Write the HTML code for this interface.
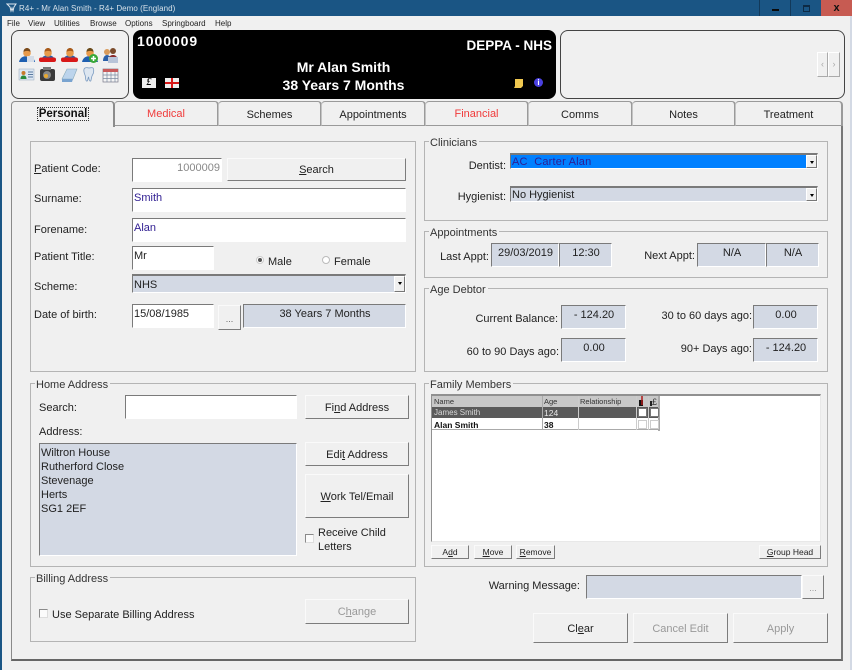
<!DOCTYPE html>
<html><head><meta charset="utf-8"><style>
html,body{margin:0;padding:0}
body{width:852px;height:670px;position:relative;overflow:hidden;background:#f0f0f0;font:11px/14px "Liberation Sans",sans-serif;color:#222;filter:blur(.3px)}
div,span,svg{position:absolute;box-sizing:border-box}
.t{white-space:nowrap;margin-top:1px}
.r{text-align:right}
.c{text-align:center}
u{text-decoration:underline}
.g{border:1px solid #b4b4b4}
.l{position:absolute;background:#f0f0f0;padding:0 2px 0 1px;white-space:nowrap;color:#333;margin-top:1px;height:13px}
.b{background:#f0f0f0;border:1px solid;border-color:#fafafa #7c7c7c #7c7c7c #fafafa;text-align:center;white-space:nowrap;color:#222}
.d{color:#999}
.i{background:#fff;border:1px solid;border-color:#7a7a7a #fff #fff #7a7a7a;white-space:nowrap;padding:2px 0 0 1px;line-height:14px}
.s{background:#d3d9e4}
.n{color:#2f1d91}
.tab{top:101px;height:25px;border:1px solid #9a9a9a;border-left-color:#c4c4c4;border-radius:4px 4px 0 0;background:#f0f0f0;text-align:center;line-height:25px;border-right-width:2px;padding-top:1px}
.red{color:#f03a3a}
.ar{right:0;top:0;width:11px;background:#f0f0f0;border:1px solid;border-color:#fff #777 #777 #fff}
.ar:after{content:"";position:absolute;left:3px;top:5px;border:2px solid transparent;border-top:3px solid #000;border-bottom:0}
.cb{background:#fbfbfb;border:1px solid;border-color:#8a8a8a #ddd #ddd #8a8a8a;width:9px;height:9px}
</style></head><body>
<!-- title bar -->
<div style="left:0;top:0;width:852px;height:16px;background:#1a5584"></div>
<div style="left:0;top:16px;width:2px;height:654px;background:#1a5584"></div>
<div style="left:850px;top:16px;width:2px;height:654px;background:#d3d9e4"></div>
<svg style="left:6px;top:2px" width="12" height="13" viewBox="0 0 12 13"><path d="M1 2h9l-2 3-1 4-1-3-1 3-1-4z" fill="none" stroke="#dfe8ef" stroke-width="1"/></svg>
<div class="t" style="left:19px;top:1px;color:#d6e0e8;font-size:8px;letter-spacing:.05px">R4+ - Mr Alan Smith - R4+ Demo (England)</div>
<div style="left:759px;top:0;width:31px;height:16px;border-left:1px solid #12395a;background:#1a5584"></div>
<div style="left:772px;top:9px;width:7px;height:2px;background:#0a0a0a"></div>
<div style="left:790px;top:0;width:31px;height:16px;border-left:1px solid #12395a"></div>
<div style="left:803px;top:5px;width:7px;height:7px;border:1px solid #0d2a44;border-top-width:2px"></div>
<div style="left:821px;top:0;width:31px;height:16px;background:#c75b52;color:#111;text-align:center;font-weight:bold;line-height:16px;font-size:11px">x</div>
<!-- menu -->
<div class="t" style="left:7px;top:16px;font-size:8px">File</div>
<div class="t" style="left:28px;top:16px;font-size:8px">View</div>
<div class="t" style="left:54px;top:16px;font-size:8px">Utilities</div>
<div class="t" style="left:90px;top:16px;font-size:8px">Browse</div>
<div class="t" style="left:125px;top:16px;font-size:8px">Options</div>
<div class="t" style="left:162px;top:16px;font-size:8px">Springboard</div>
<div class="t" style="left:215px;top:16px;font-size:8px">Help</div>
<!-- header panels -->
<div style="left:11px;top:30px;width:118px;height:69px;border:1px solid #444;border-radius:8px"></div>
<div style="left:133px;top:30px;width:423px;height:69px;background:#000;border-radius:8px"></div>
<div style="left:560px;top:30px;width:285px;height:69px;border:1px solid #444;border-radius:8px"></div>
<div style="left:817px;top:52px;width:11px;height:25px;background:#f0f0f0;border:1px solid;border-color:#fff #aaa #aaa #fff;color:#aaa;line-height:22px;text-align:center;font-size:9px">‹</div>
<div style="left:828px;top:52px;width:12px;height:25px;background:#f0f0f0;border:1px solid;border-color:#fff #aaa #aaa #fff;color:#aaa;line-height:22px;text-align:center;font-size:9px">›</div>
<!-- toolbar icons -->
<svg style="left:18px;top:47px;filter:blur(.3px)" width="104" height="37" viewBox="0 0 104 37">
<g><path d="M1 15c1-5 5-6 8-6s7 1 8 6z" fill="#1f5fb0"/><circle cx="9" cy="6" r="3.8" fill="#e89a4a"/><path d="M5.500 5c0-3 2-4 3.500-4s3.500 1 3.500 4c-2-1.500-5-1.500-7 0z" fill="#7a4a1a"/><rect x="9" y="9" width="7" height="6" fill="#d5dde8"/></g>
<g transform="translate(21 0)"><path d="M2 13c1-4 5-5 7-5s6 1 7 5z" fill="#2a5fa8"/><circle cx="9" cy="6" r="3.800" fill="#e89a4a"/><path d="M5.500 5c0-3 2-4 3.500-4s3.500 1 3.500 4c-2-1.500-5-1.500-7 0z" fill="#a85a1a"/><rect x="0" y="10.500" width="17" height="4.500" rx="2" fill="#d81818"/></g>
<g transform="translate(43 0)"><path d="M2 13c1-4 5-5 7-5s6 1 7 5z" fill="#2a5fa8"/><circle cx="9" cy="6" r="3.800" fill="#e89a4a"/><path d="M5.500 5c0-3 2-4 3.500-4s3.500 1 3.500 4c-2-1.500-5-1.500-7 0z" fill="#a85a1a"/><rect x="0" y="10.500" width="17" height="4.500" rx="2" fill="#d81818"/></g>
<g transform="translate(63 0)"><path d="M1 15c1-5 5-6 8-6s7 1 8 6z" fill="#1f5fb0"/><circle cx="9" cy="6" r="3.800" fill="#e89a4a"/><path d="M5.500 5c0-3 2-4 3.500-4s3.500 1 3.500 4c-2-1.500-5-1.500-7 0z" fill="#6a4a1a"/><circle cx="12.500" cy="11.500" r="4.500" fill="#38a838"/><path d="M10 11.500h5M12.500 9v5" stroke="#fff" stroke-width="1.500"/></g>
<g transform="translate(84 0)"><circle cx="5" cy="5" r="3" fill="#d89a5a"/><path d="M1 14c0-4 2-6 4-6s4 2 4 6z" fill="#2a5fa8"/><circle cx="11" cy="4" r="3" fill="#7a4a2a"/><path d="M6 15c0-6 3-7 5-7s5 1 5 7z" fill="#8a2a2a"/><rect x="6" y="10" width="10" height="6" fill="#b8c4d8"/></g>
<g transform="translate(1 21)"><rect x="0" y="1" width="15" height="11" fill="#dce6f2" stroke="#9ab" stroke-width=".5"/><circle cx="4.500" cy="5" r="2" fill="#c87a2a"/><path d="M1.500 11c0-3 1.500-3.500 3-3.500s3 .5 3 3.500z" fill="#2a8a3a"/><path d="M9 4h5M9 6.500h5M9 9h5" stroke="#5a7aa0"/></g>
<g transform="translate(22 20)"><rect x="0" y="2" width="15" height="12" rx="2" fill="#3a3a3a"/><rect x="3" y="0" width="8" height="3" fill="#777"/><circle cx="7" cy="8" r="4" fill="#888"/><circle cx="6" cy="9" r="2" fill="#e8a830"/></g>
<g transform="translate(44 21)"><path d="M5 1h10l-4 10H0z" fill="#bcd4ec" stroke="#8ab" stroke-width=".6"/><path d="M0 11h11l-1 3H0z" fill="#7aa4d0"/></g>
<g transform="translate(65 20)"><path d="M2 1c2-1 3 0 4 0s3-1 4 0 1 5-.5 7-1 7-2.500 6-1-4-1.500-4-.5 5-2 4S3 10 2 8 0 2 2 1z" fill="#dde6f0" stroke="#7a9ac0" stroke-width=".8"/></g>
<g transform="translate(84 20)"><rect x="1" y="2" width="15" height="13" fill="#f4f4f4" stroke="#778" stroke-width=".7"/><rect x="1" y="2" width="15" height="3" fill="#c85a5a"/><path d="M1 8h15M1 11.500h15M5 5v10M9 5v10M13 5v10" stroke="#7a8aa0" stroke-width=".7"/></g>
</svg>
<!-- banner text -->
<div class="t" style="left:137px;top:34px;margin:0;color:#fff;font-weight:bold;font-size:14px;letter-spacing:.95px">1000009</div>
<div class="t r" style="left:400px;width:152px;top:38px;color:#fff;font-weight:bold;font-size:13.5px">DEPPA - NHS</div>
<div class="t c" style="left:133px;width:421px;top:60px;margin:0;color:#fff;font-weight:bold;font-size:14px">Mr Alan Smith</div>
<div class="t c" style="left:133px;width:421px;top:78px;margin:0;color:#fff;font-weight:bold;font-size:14px">38 Years 7 Months</div>
<div class="c" style="left:142px;top:78px;width:14px;height:10px;background:#eee;color:#000;font:italic bold 10px/10px 'Liberation Serif',serif">£</div>
<div style="left:165px;top:78px;width:14px;height:10px;background:#eee"></div>
<div style="left:165px;top:82px;width:14px;height:2px;background:#d81818"></div>
<div style="left:171px;top:78px;width:2px;height:10px;background:#d81818"></div>
<svg style="left:513px;top:78px" width="11" height="11" viewBox="0 0 11 11"><path d="M2 1h8v7l-2 2H1l1-2z" fill="#f0c850"/></svg>
<div class="c" style="left:534px;top:78px;width:9px;height:9px;border-radius:50%;background:#4a40e0;color:#fff;font:bold 8px/9px 'Liberation Sans',sans-serif">i</div>
<!-- tab content box -->
<div style="left:11px;top:125px;width:832px;height:536px;border:1px solid #8a8a8a;border-right:2px solid #777;border-bottom:2px solid #666"></div>
<div class="tab red" style="left:114px;width:105px;line-height:23px">Medical</div>
<div class="tab" style="left:218px;width:104px">Schemes</div>
<div class="tab" style="left:321px;width:105px">Appointments</div>
<div class="tab red" style="left:425px;width:104px;line-height:23px">Financial</div>
<div class="tab" style="left:528px;width:105px">Comms</div>
<div class="tab" style="left:632px;width:104px">Notes</div>
<div class="tab" style="left:735px;width:108px">Treatment</div>
<div style="left:11px;top:101px;width:104px;height:26px;border:1px solid #8c8c8c;border-bottom:0;border-right:2px solid #8c8c8c;border-radius:4px 4px 0 0;background:#f0f0f0"></div>
<div class="c" style="left:37px;top:107px;width:52px;height:14px;border:1px dotted #333;font-weight:bold;line-height:13px;color:#111;font-size:11.500px;white-space:nowrap">Personal</div>
<!-- Personal group -->
<div class="g" style="left:30px;top:141px;width:386px;height:231px"></div>
<div class="t" style="left:34px;top:161px"><u>P</u>atient Code:</div>
<div class="i r" style="left:132px;top:158px;width:90px;height:24px;color:#888;padding-right:1px">1000009</div>
<div class="b" style="left:227px;top:158px;width:179px;height:23px;line-height:22px"><u>S</u>earch</div>
<div class="t" style="left:34px;top:191px">Surname:</div>
<div class="i n" style="left:132px;top:188px;width:274px;height:24px">Smith</div>
<div class="t" style="left:34px;top:222px">Forename:</div>
<div class="i n" style="left:132px;top:218px;width:274px;height:24px">Alan</div>
<div class="t" style="left:34px;top:249px">Patient Title:</div>
<div class="i" style="left:132px;top:246px;width:82px;height:24px">Mr</div>
<div style="left:256px;top:256px;width:8px;height:8px;border-radius:50%;background:#fff;border:1px solid #ccc"></div>
<div style="left:258px;top:258px;width:4px;height:4px;border-radius:50%;background:#555"></div>
<div class="t" style="left:268px;top:254px">Male</div>
<div style="left:322px;top:256px;width:8px;height:8px;border-radius:50%;background:#fff;border:1px solid #bbb"></div>
<div class="t" style="left:334px;top:254px">Female</div>
<div class="t" style="left:34px;top:279px">Scheme:</div>
<div class="i s" style="left:132px;top:274px;width:274px;height:19px;border-top-width:2px">NHS<div class="ar" style="height:16px"></div></div>
<div class="t" style="left:34px;top:307px">Date of birth:</div>
<div class="i" style="left:132px;top:304px;width:82px;height:24px">15/08/1985</div>
<div class="b" style="left:218px;top:305px;width:23px;height:25px;line-height:26px;font-size:9px;color:#666">...</div>
<div class="i s c" style="left:243px;top:304px;width:163px;height:24px">38 Years 7 Months</div>
<!-- Clinicians -->
<div class="g" style="left:424px;top:141px;width:404px;height:80px"></div>
<div class="l" style="left:429px;top:135px">Clinicians</div>
<div class="t r" style="left:440px;width:66px;top:158px">Dentist:</div>
<div class="i" style="left:510px;top:153px;width:308px;height:16px;background:#0080ff;color:#2f1d91;padding-top:1px;border-top-width:2px;line-height:12px;letter-spacing:.2px">AC&nbsp; Carter Alan<div class="ar" style="height:13px"></div></div>
<div class="t r" style="left:440px;width:66px;top:189px">Hygienist:</div>
<div class="i s" style="left:510px;top:186px;width:308px;height:16px;padding-top:1px;border-top-width:2px;line-height:12px">No Hygienist<div class="ar" style="height:13px"></div></div>
<!-- Appointments -->
<div class="g" style="left:424px;top:231px;width:404px;height:47px"></div>
<div class="l" style="left:429px;top:225px">Appointments</div>
<div class="t r" style="left:420px;width:69px;top:249px">Last Appt:</div>
<div class="i s c" style="left:491px;top:243px;width:68px;height:24px">29/03/2019</div>
<div class="i s c" style="left:559px;top:243px;width:53px;height:24px">12:30</div>
<div class="t r" style="left:620px;width:75px;top:248px">Next Appt:</div>
<div class="i s c" style="left:697px;top:243px;width:69px;height:24px">N/A</div>
<div class="i s c" style="left:766px;top:243px;width:53px;height:24px">N/A</div>
<!-- Age Debtor -->
<div class="g" style="left:424px;top:288px;width:404px;height:84px"></div>
<div class="l" style="left:429px;top:282px">Age Debtor</div>
<div class="t r" style="left:440px;width:118px;top:311px">Current Balance:</div>
<div class="i s c" style="left:561px;top:305px;width:65px;height:24px">- 124.20</div>
<div class="t r" style="left:630px;width:122px;top:308px">30 to 60 days ago:</div>
<div class="i s c" style="left:753px;top:305px;width:65px;height:24px">0.00</div>
<div class="t r" style="left:440px;width:119px;top:344px">60 to 90 Days ago:</div>
<div class="i s c" style="left:561px;top:338px;width:65px;height:24px">0.00</div>
<div class="t r" style="left:640px;width:112px;top:341px">90+ Days ago:</div>
<div class="i s c" style="left:753px;top:338px;width:65px;height:24px">- 124.20</div>
<!-- Home Address -->
<div class="g" style="left:30px;top:383px;width:386px;height:184px"></div>
<div class="l" style="left:35px;top:377px">Home Address</div>
<div class="t" style="left:39px;top:400px">Search:</div>
<div class="i" style="left:125px;top:395px;width:172px;height:24px"></div>
<div class="b" style="left:305px;top:395px;width:104px;height:24px;line-height:24px">Fi<u>n</u>d Address</div>
<div class="t" style="left:39px;top:424px">Address:</div>
<div class="i s" style="left:39px;top:443px;width:258px;height:113px;white-space:pre;line-height:14px">Wiltron House
Rutherford Close
Stevenage
Herts
SG1 2EF</div>
<div class="b" style="left:305px;top:442px;width:104px;height:24px;line-height:24px">Edi<u>t</u> Address</div>
<div class="b" style="left:305px;top:474px;width:104px;height:44px;line-height:44px"><u>W</u>ork Tel/Email</div>
<div class="cb" style="left:305px;top:534px"></div>
<div class="t" style="left:318px;top:525px">Receive Child</div>
<div class="t" style="left:318px;top:539px">Letters</div>
<!-- Billing -->
<div class="g" style="left:30px;top:577px;width:386px;height:65px"></div>
<div class="l" style="left:35px;top:571px">Billing Address</div>
<div class="cb" style="left:39px;top:609px"></div>
<div class="t" style="left:52px;top:607px">Use Separate Billing Address</div>
<div class="b d" style="left:305px;top:599px;width:104px;height:25px;line-height:25px">C<u>h</u>ange</div>
<!-- Family -->
<div class="g" style="left:424px;top:383px;width:404px;height:184px"></div>
<div class="l" style="left:429px;top:377px">Family Members</div>
<div style="left:431px;top:394px;width:390px;height:148px;background:#fff;border:1px solid;border-color:#909090 #e8e8e8 #e8e8e8 #909090;border-top-width:2px"></div>
<div style="left:432px;top:396px;width:227px;height:12px;background:#c8c8c8"></div>
<div style="left:432px;top:407px;width:227px;height:11px;background:#5a5a5a"></div>
<div style="left:432px;top:418px;width:227px;height:12px;background:#fff;border-bottom:1px solid #aaa"></div>
<div style="left:658px;top:396px;width:2px;height:35px;background:#aaa"></div>
<div style="left:542px;top:396px;width:1px;height:34px;background:#aaa"></div>
<div style="left:578px;top:396px;width:1px;height:34px;background:#ccc"></div>
<div style="left:636px;top:396px;width:1px;height:34px;background:#ccc"></div>
<div style="left:648px;top:396px;width:1px;height:34px;background:#ccc"></div>
<div class="t" style="left:434px;top:394px;font-size:7.500px;color:#333">Name</div>
<div class="t" style="left:544px;top:394px;font-size:7.500px;color:#333">Age</div>
<div class="t" style="left:580px;top:394px;font-size:7.500px;color:#333">Relationship</div>
<svg style="left:637px;top:395px" width="22" height="12" viewBox="0 0 22 12"><rect x="2" y="5" width="4" height="6" fill="#111"/><path d="M5 1v9" stroke="#b01818" stroke-width="1.500"/><rect x="13" y="6" width="2" height="5" fill="#222"/><text x="15" y="10" font-size="9" font-family="Liberation Sans" fill="#333">£</text></svg>
<div class="t" style="left:434px;top:405px;font-size:8px;color:#d8d8d8">James Smith</div>
<div class="t" style="left:544px;top:405px;font-size:8.500px;color:#e8e8e8">124</div>
<div class="t" style="left:434px;top:417px;font-size:8.500px;font-weight:bold;color:#111">Alan Smith</div>
<div class="t" style="left:544px;top:417px;font-size:8.500px;font-weight:bold;color:#111">38</div>
<div class="cb" style="left:638px;top:408px;background:#fff;border-color:#777"></div>
<div class="cb" style="left:650px;top:408px;background:#fff;border-color:#777"></div>
<div class="cb" style="left:638px;top:420px;background:#fff;border-color:#ccc"></div>
<div class="cb" style="left:650px;top:420px;background:#fff;border-color:#ccc"></div>
<div class="b" style="left:431px;top:545px;width:38px;height:14px;line-height:12px;font-size:8.500px">A<u>d</u>d</div>
<div class="b" style="left:474px;top:545px;width:38px;height:14px;line-height:12px;font-size:8.500px"><u>M</u>ove</div>
<div class="b" style="left:516px;top:545px;width:39px;height:14px;line-height:12px;font-size:8.500px"><u>R</u>emove</div>
<div class="b" style="left:759px;top:545px;width:62px;height:14px;line-height:12px;font-size:8.500px"><u>G</u>roup Head</div>
<!-- warning -->
<div class="t r" style="left:460px;width:120px;top:578px">Warning Message:</div>
<div class="i s" style="left:586px;top:575px;width:216px;height:24px"></div>
<div class="b" style="left:802px;top:575px;width:22px;height:24px;line-height:25px;font-size:9px;color:#999">...</div>
<!-- bottom buttons -->
<div class="b" style="left:533px;top:613px;width:95px;height:30px;line-height:30px">Cl<u>e</u>ar</div>
<div class="b d" style="left:633px;top:613px;width:95px;height:30px;line-height:30px">Cancel Edit</div>
<div class="b d" style="left:733px;top:613px;width:95px;height:30px;line-height:30px">Apply</div>
</body></html>
